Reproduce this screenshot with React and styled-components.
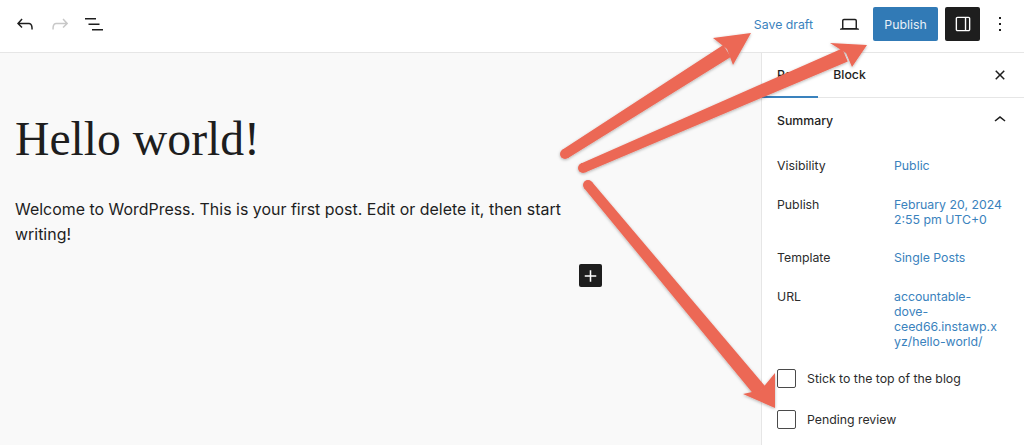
import styled, { createGlobalStyle } from "styled-components";

const GlobalStyle = createGlobalStyle`
  html, body {
    margin: 0;
    padding: 0;
    background: #fff;
  }
  * {
    box-sizing: border-box;
  }
`;

const Page = styled.div`
  position: relative;
  width: 1024px;
  height: 445px;
  overflow: hidden;
  display: flex;
  flex-direction: column;
  font-family: Inter, "Liberation Sans", sans-serif;
  font-size: 12.3px;
  color: #1e1e1e;
`;

const Header = styled.header`
  height: 53px;
  flex: none;
  display: flex;
  align-items: center;
  justify-content: space-between;
  padding: 0 12px 4px 13px;
  background: #fff;
  border-bottom: 1px solid #e6e6e6;
`;

const Tools = styled.div`
  display: flex;
  align-items: center;
`;

const IconSlot = styled.span`
  width: ${(p) => p.$width || 24}px;
  margin-left: ${(p) => p.$offset || 0}px;
  display: flex;
  justify-content: center;
  align-items: center;
  color: ${(p) => p.$color || "#1e1e1e"};
`;

const Glyph = styled.svg`
  width: ${(p) => p.$size || 24}px;
  height: ${(p) => p.$size || 24}px;
  fill: currentColor;
  display: block;
`;

const SaveDraft = styled.span`
  color: #3a82bd;
  margin-right: 24px;
`;

const PublishButton = styled.span`
  width: 65px;
  height: 34px;
  margin-left: 12px;
  display: flex;
  align-items: center;
  justify-content: center;
  background: #317ab6;
  color: #e8f0f7;
  border-radius: 2px;
`;

const SidebarToggle = styled.span`
  width: 35px;
  height: 34px;
  margin-left: 7px;
  margin-right: 8px;
  display: flex;
  align-items: center;
  justify-content: center;
  background: #1e1e1e;
  color: #fff;
  border-radius: 2px;
`;

const Body = styled.div`
  flex: 1;
  display: flex;
  min-height: 0;
`;

const Canvas = styled.main`
  flex: 1;
  background: #f9f9f9;
  padding: 55px 0 0 15px;
`;

const Title = styled.h1`
  margin: 0;
  font-family: "Liberation Serif", serif;
  font-weight: 400;
  font-size: 47.7px;
  line-height: 62px;
  color: #1e1e1e;
`;

const Paragraph = styled.p`
  margin: 27px 0 0;
  width: 550px;
  font-size: 15.95px;
  line-height: 25px;
  color: #1e1e1e;
`;

const Inserter = styled.span`
  width: 23px;
  height: 23px;
  margin: 17px 0 0 564px;
  display: flex;
  align-items: center;
  justify-content: center;
  background: #1e1e1e;
  color: #fff;
  border-radius: 2px;
`;

const Sidebar = styled.aside`
  width: 263px;
  flex: none;
  background: #fff;
  border-left: 1px solid #e6e6e6;
`;

const Tabs = styled.div`
  height: 45px;
  display: flex;
  align-items: center;
  padding-right: 12px;
  border-bottom: 1px solid #e6e6e6;
`;

const Tab = styled.span`
  height: 44px;
  width: ${(p) => p.$width}px;
  display: flex;
  align-items: center;
  justify-content: center;
  font-weight: 500;
  margin-bottom: -1px;
  border-bottom: ${(p) => (p.$active ? "2px solid #3a82bd" : "2px solid transparent")};
`;

const Spacer = styled.span`
  flex: 1;
`;

const PanelTitle = styled.div`
  height: 46px;
  display: flex;
  align-items: center;
  justify-content: space-between;
  padding: 0 12px 2px 15px;
  font-weight: 500;
`;

const Rows = styled.div`
  padding: 14px 0 0 15px;
  display: flex;
  flex-direction: column;
  gap: 23.5px;
`;

const Row = styled.div`
  display: grid;
  grid-template-columns: 117px 120px;
  line-height: 15px;
`;

const Label = styled.span`
  color: #2c2c2c;
`;

const Value = styled.span`
  color: #3a82bd;
  white-space: nowrap;
`;

const Checks = styled.div`
  margin-top: 20.5px;
  padding-left: 15px;
  display: flex;
  flex-direction: column;
  gap: 22px;
`;

const Check = styled.label`
  display: flex;
  align-items: center;
  gap: 11px;
  color: #2c2c2c;
`;

const Box = styled.span`
  width: 19px;
  height: 19px;
  background: #fff;
  border: 1px solid #4a4a4a;
  border-radius: 2px;
`;

const ArrowLayer = styled.svg`
  position: absolute;
  inset: 0;
  width: 1024px;
  height: 445px;
  pointer-events: none;
`;

const arrows = [
  { tail: [565, 154], neck: [727, 51], head: "751,33 713,38 727,49 733,65" },
  { tail: [583, 168], neck: [845, 55], head: "867,45 830,43 846,53 852,67" },
  { tail: [588, 185], neck: [760, 391], head: "775,408 775,373 761,390 743,394" },
];

// shaft gets a bit wider towards the head
const shaftPoints = ([x1, y1], [x2, y2]) => {
  const len = Math.hypot(x2 - x1, y2 - y1);
  const nx = -(y2 - y1) / len;
  const ny = (x2 - x1) / len;
  const a = 5;
  const b = 7;
  return [
    [x1 + nx * a, y1 + ny * a],
    [x2 + nx * b, y2 + ny * b],
    [x2 - nx * b, y2 - ny * b],
    [x1 - nx * a, y1 - ny * a],
  ].join(" ");
};

export default function App() {
  return (
    <Page>
      <GlobalStyle />
      <Header>
        <Tools>
          <IconSlot>
            <Glyph viewBox="0 0 24 24">
              <path d="M18.3 11.7c-.6-.6-1.4-.9-2.3-.9H6.7l2.9-3.3-1.1-1-4.5 5L8.5 16l1-1-2.7-2.7H16c.5 0 .9.2 1.3.5 1 1 1 3.4 1 4.5v.3h1.5v-.2c0-1.5 0-4.3-1.5-5.7z" />
            </Glyph>
          </IconSlot>
          <IconSlot $width={34} $offset={6} $color="#c8c8c8">
            <Glyph viewBox="0 0 24 24">
              <path d="M15.6 6.5l-1.1 1 2.9 3.3H8c-.9 0-1.7.3-2.3.9-1.4 1.5-1.4 4.2-1.4 5.6v.2h1.5v-.3c0-1.1 0-3.5 1-4.5.3-.3.7-.5 1.3-.5h9.2L14.5 15l1.1 1.1 4.6-4.6-4.6-5z" />
            </Glyph>
          </IconSlot>
          <IconSlot $width={34}>
            <Glyph viewBox="0 0 24 24">
              <path d="M3 6h11v1.5H3V6zm3.5 5.5h11V13h-11v-1.5zM21 17H10v1.5h11V17z" />
            </Glyph>
          </IconSlot>
        </Tools>
        <Tools>
          <SaveDraft>Save draft</SaveDraft>
          <IconSlot>
            <Glyph $size={23} viewBox="0 0 24 24">
              <path d="M20.5 16h-.7V8c0-1.1-.9-2-2-2H6.2c-1.1 0-2 .9-2 2v8h-.7c-.8 0-1.5.7-1.5 1.5h20c0-.8-.7-1.5-1.5-1.5zM5.7 8c0-.3.2-.5.5-.5h11.6c.3 0 .5.2.5.5v7.6H5.7V8z" />
            </Glyph>
          </IconSlot>
          <PublishButton>Publish</PublishButton>
          <SidebarToggle>
            <Glyph $size={22} viewBox="0 0 24 24">
              <path d="M18 4H6c-1.1 0-2 .9-2 2v12c0 1.1.9 2 2 2h12c1.1 0 2-.9 2-2V6c0-1.1-.9-2-2-2zm-4 14.5H6c-.3 0-.5-.2-.5-.5V6c0-.3.2-.5.5-.5h8v13zm4.5-.5c0 .3-.2.5-.5.5h-2.5v-13H18c.3 0 .5.2.5.5v12z" />
            </Glyph>
          </SidebarToggle>
          <IconSlot>
            <Glyph viewBox="0 0 24 24">
              <path d="M13 19h-2v-2h2v2zm0-6h-2v-2h2v2zm0-6h-2V5h2v2z" />
            </Glyph>
          </IconSlot>
        </Tools>
      </Header>
      <Body>
        <Canvas>
          <Title>Hello world!</Title>
          <Paragraph>
            Welcome to WordPress. This is your first post. Edit or delete it, then start writing!
          </Paragraph>
          <Inserter>
            <Glyph viewBox="0 0 24 24">
              <path d="M18 11.2h-5.2V6h-1.6v5.2H6v1.6h5.2V18h1.6v-5.2H18z" />
            </Glyph>
          </Inserter>
        </Canvas>
        <Sidebar>
          <Tabs>
            <Tab $active $width={56}>Post</Tab>
            <Tab $width={63}>Block</Tab>
            <Spacer />
            <Glyph viewBox="0 0 24 24">
              <path d="M12 13.06l3.712 3.713 1.061-1.06L13.061 12l3.712-3.712-1.06-1.06L12 10.938 8.288 7.227l-1.061 1.06L10.939 12l-3.712 3.712 1.06 1.061L12 13.061z" />
            </Glyph>
          </Tabs>
          <PanelTitle>
            Summary
            <Glyph viewBox="0 0 24 24">
              <path d="M6.5 12.4L12 8l5.5 4.4-.9 1.2L12 10l-4.5 3.6-1-1.2z" />
            </Glyph>
          </PanelTitle>
          <Rows>
            <Row>
              <Label>Visibility</Label>
              <Value>Public</Value>
            </Row>
            <Row>
              <Label>Publish</Label>
              <Value>February 20, 2024<br />2:55 pm UTC+0</Value>
            </Row>
            <Row>
              <Label>Template</Label>
              <Value>Single Posts</Value>
            </Row>
            <Row>
              <Label>URL</Label>
              <Value>accountable-<br />dove-<br />ceed66.instawp.x<br />yz/hello-world/</Value>
            </Row>
          </Rows>
          <Checks>
            <Check><Box />Stick to the top of the blog</Check>
            <Check><Box />Pending review</Check>
          </Checks>
        </Sidebar>
      </Body>
      <ArrowLayer viewBox="0 0 1024 445">
        <defs>
          <filter id="arrowShadow" x="-10%" y="-10%" width="120%" height="120%">
            <feDropShadow dx="0" dy="1" stdDeviation="1.5" floodColor="#000" floodOpacity="0.3" />
          </filter>
        </defs>
        {arrows.map((a) => (
          <g key={a.head} filter="url(#arrowShadow)" fill="#ec6755">
            <circle cx={a.tail[0]} cy={a.tail[1]} r="5" />
            <polygon points={shaftPoints(a.tail, a.neck)} />
            <polygon points={a.head} />
          </g>
        ))}
      </ArrowLayer>
    </Page>
  );
}
